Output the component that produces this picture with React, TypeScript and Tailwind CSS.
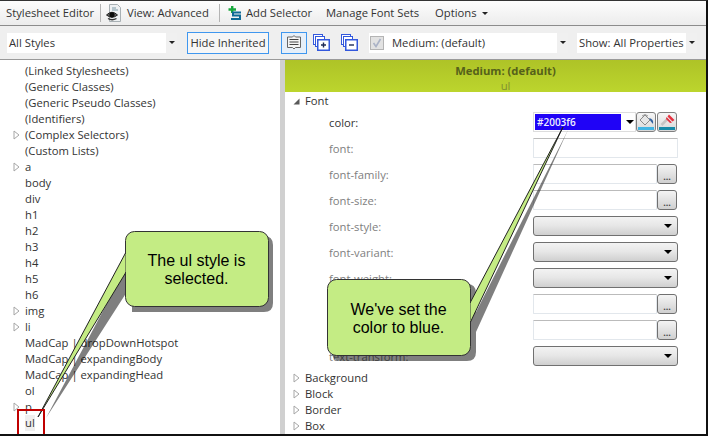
const treeItems = [
  { label: "(Linked Stylesheets)" },
  { label: "(Generic Classes)" },
  { label: "(Generic Pseudo Classes)" },
  { label: "(Identifiers)" },
  { label: "(Complex Selectors)", arrow: true },
  { label: "(Custom Lists)" },
  { label: "a", arrow: true },
  { label: "body" },
  { label: "div" },
  { label: "h1" },
  { label: "h2" },
  { label: "h3" },
  { label: "h4" },
  { label: "h5" },
  { label: "h6" },
  { label: "img", arrow: true },
  { label: "li", arrow: true },
  { label: "MadCap | dropDownHotspot" },
  { label: "MadCap | expandingBody" },
  { label: "MadCap | expandingHead" },
  { label: "ol" },
  { label: "p", arrow: true },
  { label: "ul", selected: true },
];

function Caret() {
  return <span className="block w-0 h-0 border-x-[4px] border-x-transparent border-t-[4px] border-t-black" />;
}

function SmallCaret() {
  return <span className="block w-0 h-0 border-x-[3px] border-x-transparent border-t-[3px] border-t-[#222]" />;
}

function TreeArrow() {
  return (
    <svg width="7" height="10" viewBox="0 0 7 10" className="shrink-0">
      <path d="M1 1 L6 5 L1 9 Z" fill="#fff" stroke="#a6a6a6" />
    </svg>
  );
}

function Combo({ className, children }: { className: string; children: React.ReactNode }) {
  return (
    <div className={`h-5 bg-white flex items-center justify-between ${className}`}>
      <span className="pl-0.5 flex items-center whitespace-nowrap pt-px">{children}</span>
      <span className="w-[11px] h-5 bg-[#f0f0f0] flex items-center justify-center shrink-0">
        <SmallCaret />
      </span>
    </div>
  );
}

function Sep() {
  return <span className="w-px h-[18px] bg-[#b4b4b4]" />;
}

function EyeIcon() {
  return (
    <svg width="16" height="19" viewBox="0 0 16 19">
      <path d="M3.5 0.5 H11.5 L14.5 3.5 V17.5 H3.5 Z" fill="#eef1f3" stroke="#a8b0b4" />
      <path d="M6 4 H10 M6 6 H12" stroke="#7d9ba8" />
      <path d="M0.5 11 Q6 5.5 11.5 11 Q6 15.5 0.5 11 Z" fill="#666" stroke="#222" />
      <circle cx="6" cy="10.8" r="2.6" fill="#0c0c0c" />
      <path d="M2 14.5 Q6 17 10.5 14.5" stroke="#333" strokeWidth="1.4" fill="none" />
    </svg>
  );
}

function AddSelectorIcon() {
  return (
    <svg width="14" height="15" viewBox="0 0 14 15">
      <path d="M0.5 3.5 H8 M4.2 0 V7" stroke="#18a83c" strokeWidth="2.4" />
      <path d="M13 6.5 H5 V9.5 H12 V13 H3" stroke="#0f6a96" strokeWidth="2" fill="none" />
    </svg>
  );
}

function NoteIcon() {
  return (
    <svg width="16" height="17" viewBox="0 0 16 17">
      <path d="M1.5 3 H6.5 L8 1.5 L9.5 3 H14.5 V13.5 H9.5 L8 15 L6.5 13.5 H1.5 Z" fill="#f4f4f4" stroke="#666" />
      <path d="M3.5 5.5 H12.5 M3.5 8 H12.5 M3.5 10.5 H12.5" stroke="#444" />
    </svg>
  );
}

function PagesIcon({ minus }: { minus?: boolean }) {
  return (
    <svg width="17" height="17" viewBox="0 0 17 17">
      <rect x="0.5" y="0.5" width="9" height="10" fill="#fff" stroke="#3358dd" />
      <rect x="2.5" y="2.5" width="9" height="10" fill="#fff" stroke="#3358dd" />
      <rect x="4.75" y="5.75" width="11.5" height="10.5" fill="#fff" stroke="#3358dd" strokeWidth="1.5" />
      <path d={minus ? "M8 11 H13" : "M8 11 H13 M10.5 8.5 V13.5"} stroke="#1d2a55" strokeWidth="1.4" />
    </svg>
  );
}

function FillIcon() {
  return (
    <svg width="18" height="18" viewBox="0 0 18 18">
      <path d="M3 7 L8 2 L13 7 L8 12 Z" fill="#e6e6e6" stroke="#8a8a8a" />
      <path d="M5 3 Q8 0 11 3" stroke="#9a9a9a" fill="none" />
      <path d="M12 5 Q17 6 16 11 L13.5 8 Z" fill="#2f5f9f" />
      <rect x="1" y="14" width="16" height="3" fill="#42b5e3" />
    </svg>
  );
}

function PickerIcon() {
  return (
    <svg width="18" height="18" viewBox="0 0 18 18">
      <path d="M3.5 12 L10 5.5" stroke="#c4c4c4" strokeWidth="2.5" />
      <path d="M8.5 4 L14 9.5 L12 10 L8 6 Z M11 1.5 L16.5 7 L14.5 8.5 L9.5 3.5 Z" fill="#e5303f" />
      <rect x="1" y="14" width="16" height="3" fill="#168aa8" />
    </svg>
  );
}

function PropInput({ withButton }: { withButton?: boolean }) {
  return (
    <div className="h-5 flex">
      <div className={`h-5 bg-white border border-[#e2e7ec] border-t-[#bbb] rounded-[1px] ${withButton ? "w-[124px]" : "w-full"}`} />
      {withButton && (
        <div className="w-5 h-5 rounded-[3px] border border-[#707070] bg-gradient-to-b from-[#f4f4f4] to-[#d0d0d0] flex items-end justify-center text-[9px] leading-[12px] text-[#444] font-bold">
          ...
        </div>
      )}
    </div>
  );
}

function PropSelect() {
  return (
    <div className="h-5 rounded-[3px] border border-[#707070] bg-gradient-to-b from-[#f3f3f3] via-[#e6e6e6] to-[#cfcfcf] flex items-center justify-end pr-[5px]">
      <Caret />
    </div>
  );
}

function PropRow({ label, dark, children }: { label?: string; dark?: boolean; children: React.ReactNode }) {
  return (
    <div className="h-[26px] flex items-center">
      <span className={`w-[248px] pl-[44px] pt-[2px] ${dark ? "text-[#333]" : "text-[#808080]"}`}>{label}</span>
      <div className="w-[145px]">{children}</div>
    </div>
  );
}

function Section({ label, open }: { label: string; open?: boolean }) {
  return (
    <div className="h-4 flex items-center leading-4">
      <span className="w-5 pl-[8px] flex items-center">
        {open ? (
          <svg width="7" height="7" viewBox="0 0 7 7">
            <path d="M6.5 0.5 V6.5 H0.5 Z" fill="#595959" />
          </svg>
        ) : (
          <TreeArrow />
        )}
      </span>
      <span>{label}</span>
    </div>
  );
}

function Callouts() {
  return (
    <>
      <svg width="708" height="436" viewBox="0 0 708 436" className="absolute left-0 top-[-1px] pointer-events-none">
        <g opacity="0.5">
          <path d="M129 262 L46 418 L132 284 V312 H264 Q273 312 273 303 V245 Q273 236 264 236 H139 Q130 236 130 245 Z" fill="#000" />
        </g>
        <path d="M125.5 253 L38 417 L125.5 273" fill="#c4ec84" stroke="#222" />
        <rect x="125.5" y="231.5" width="143" height="75" rx="9" fill="#c4ec84" stroke="#333" />
        <path d="M126.5 254 V272" stroke="#c4ec84" strokeWidth="2" />
        <g opacity="0.5">
          <path d="M476 312 L568 130 L476 332 V352 Q476 361 467 361 H341 Q332 361 332 352 V293 Q332 284 341 284 H467 Q476 284 476 293 Z" fill="#000" />
        </g>
        <path d="M470.5 302 L563 127 L470.5 322" fill="#c4ec84" stroke="#222" />
        <rect x="327.5" y="279.5" width="143" height="76" rx="9" fill="#c4ec84" stroke="#333" />
        <path d="M469.5 303 V321" stroke="#c4ec84" strokeWidth="2" />
      </svg>
      <div className="absolute left-[126px] top-[251px] w-[141px] text-center font-['Liberation_Sans',sans-serif] text-[16px] leading-[18px] text-black">
        The ul style is
        <br />
        selected.
      </div>
      <div className="absolute left-[328px] top-[300px] w-[141px] text-center font-['Liberation_Sans',sans-serif] text-[16px] leading-[18px] text-black">
        We've set the
        <br />
        color to blue.
      </div>
      <div className="absolute left-[17px] top-[408px] w-[28px] h-[27px] border-2 border-[#c00000]" />
    </>
  );
}

export default function App() {
  return (
    <div className="relative w-[708px] h-[436px] overflow-hidden bg-white font-['Open_Sans',sans-serif] text-[11.25px] text-[#333] border-b-2 border-r-2 border-[#111] border-t border-t-[#333]">
      <div className="h-[25px] flex items-center bg-gradient-to-b from-[#fdfdfd] to-[#ececec] border-b border-[#8c8c8c] whitespace-nowrap">
        <span className="ml-[6px] w-[94px]">Stylesheet Editor</span>
        <Sep />
        <span className="ml-[5px] w-[21px]"><EyeIcon /></span>
        <span className="w-[92px]">View: Advanced</span>
        <Sep />
        <span className="ml-2 w-[18px]"><AddSelectorIcon /></span>
        <span className="w-[80px]">Add Selector</span>
        <span className="w-[109px]">Manage Font Sets</span>
        <span className="flex items-center gap-[5px]">
          Options
          <SmallCaret />
        </span>
      </div>
      <div className="h-[34px] flex items-center bg-[#efefef] border-b border-[#9a9a9a]">
        <Combo className="ml-[7px] w-[170px]">All Styles</Combo>
        <div className="ml-[10px] w-[82px] h-[22px] pt-px flex items-center justify-center bg-[#f6f6f6] border border-[#3f97ef] whitespace-nowrap">Hide Inherited</div>
        <div className="ml-[12px] w-[26px] h-[22px] flex items-center justify-center bg-[#e6eff9] border border-[#3f97ef]"><NoteIcon /></div>
        <span className="ml-[6px]"><PagesIcon /></span>
        <span className="ml-[11px]"><PagesIcon minus /></span>
        <Combo className="ml-[11px] w-[199px]">
          <span className="w-[14px] h-[14px] mr-[8px] -ml-[1px] bg-[#e2e2e2] border border-[#b4b4b4] flex items-center justify-center">
            <svg width="12" height="12" viewBox="0 0 12 12">
              <path d="M2.5 6 L5 9.5 L9.5 2" stroke="#aab2c6" strokeWidth="1.6" fill="none" />
            </svg>
          </span>
          Medium: (default)
        </Combo>
        <Combo className="ml-[9px] w-[120px]">Show: All Properties</Combo>
      </div>
      <div className="flex h-[374px]">
        <div className="w-[280px] pl-[13px] pt-[3px] bg-white">
          {treeItems.map((item) => (
            <div key={item.label} className="h-4 flex items-center leading-4 whitespace-nowrap">
              <span className="w-3 flex items-center">{item.arrow && <TreeArrow />}</span>
              <span className={item.selected ? "bg-[#efefef]" : ""}>{item.label}</span>
            </div>
          ))}
        </div>
        <div className="w-[5px] bg-[#d0d0d0]" />
        <div className="flex-1">
          <div className="h-[32px] bg-gradient-to-b from-[#aec327] to-[#bcd52d] text-center leading-[15px] pt-[3px] pl-[20px]">
            <div className="font-bold text-[#55601a]">Medium: (default)</div>
            <div className="text-[#7f8f30]">ul</div>
          </div>
          <div className="pt-[1px]">
            <Section label="Font" open />
            <div>
              <PropRow label="color:" dark>
                <div className="h-5 flex justify-between">
                  <div className="w-[104px] h-5 bg-white border border-[#ddd] p-px flex items-center">
                    <span className="w-[86px] h-4 bg-[#2003f6] text-[#f0f0ff] text-[10px] leading-4 pl-[2px] font-semibold">#2003f6</span>
                    <span className="ml-[5px]"><Caret /></span>
                  </div>
                  <div className="flex gap-px pr-px">
                    <div className="w-5 h-5 rounded-[3px] border border-[#808080] bg-gradient-to-b from-[#f6f6f6] to-[#d8d8d8] flex items-center justify-center"><FillIcon /></div>
                    <div className="w-5 h-5 rounded-[3px] border border-[#808080] bg-gradient-to-b from-[#f6f6f6] to-[#d8d8d8] flex items-center justify-center"><PickerIcon /></div>
                  </div>
                </div>
              </PropRow>
              <PropRow label="font:"><PropInput /></PropRow>
              <PropRow label="font-family:"><PropInput withButton /></PropRow>
              <PropRow label="font-size:"><PropInput withButton /></PropRow>
              <PropRow label="font-style:"><PropSelect /></PropRow>
              <PropRow label="font-variant:"><PropSelect /></PropRow>
              <PropRow label="font-weight:"><PropSelect /></PropRow>
              <PropRow><PropInput withButton /></PropRow>
              <PropRow><PropInput withButton /></PropRow>
              <PropRow label="text-transform:"><PropSelect /></PropRow>
            </div>
            <div className="pt-[1px]">
              <Section label="Background" />
              <Section label="Block" />
              <Section label="Border" />
              <Section label="Box" />
            </div>
          </div>
        </div>
      </div>
      <Callouts />
    </div>
  );
}
